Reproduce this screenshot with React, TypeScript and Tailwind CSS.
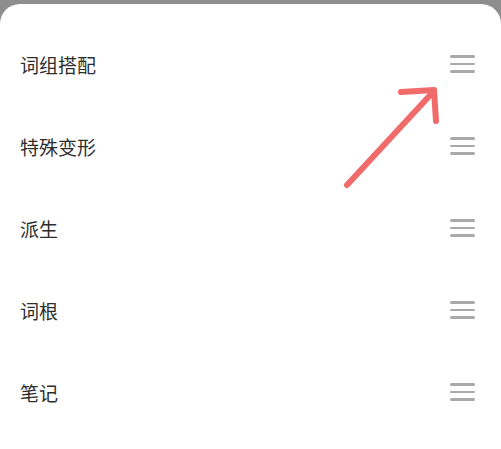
const items = ['词组搭配', '特殊变形', '派生', '词根', '笔记'];

function DragHandle() {
  return (
    <div className="flex w-[25px] flex-col gap-[5px]">
      <span className="h-[2.5px] w-full rounded-full bg-[#a9a9a9]" />
      <span className="h-[2.5px] w-full rounded-full bg-[#a9a9a9]" />
      <span className="h-[2.5px] w-full rounded-full bg-[#a9a9a9]" />
    </div>
  );
}

export default function App() {
  return (
    <div className="h-[449px] w-[501px] overflow-hidden bg-[#8e8e8e] pt-[4px]">
      <div
        className="relative h-[445px] rounded-t-[20px] bg-white pt-[19px]"
        style={{ fontFamily: '"Noto Sans CJK SC", "Noto Sans", sans-serif' }}
      >
        {items.map((label) => (
          <div key={label} className="flex h-[82px] items-center justify-between pl-[20px] pr-[26px]">
            <span className="text-[19px] leading-none text-[#2e2e2e]">{label}</span>
            <DragHandle />
          </div>
        ))}

        <svg
          className="pointer-events-none absolute left-0 top-[-4px]"
          width="501"
          height="449"
          viewBox="0 0 501 449"
          fill="none"
          stroke="#f26b6b"
          strokeWidth="6"
          strokeLinecap="round"
          strokeLinejoin="round"
        >
          <path d="M347 185 L434 91" />
          <path d="M401 92 L434 90 L436 121" />
        </svg>
      </div>
    </div>
  );
}
